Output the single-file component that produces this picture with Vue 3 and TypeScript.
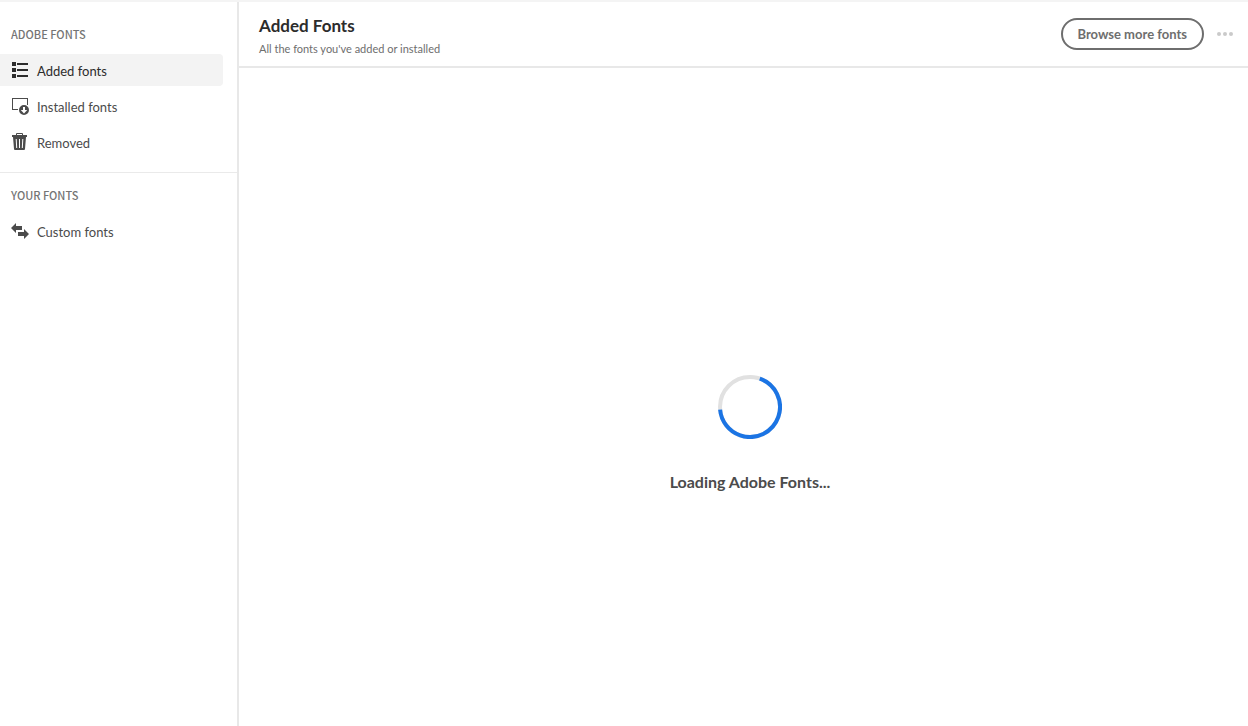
<script setup lang="ts">
import { ref } from 'vue'

type IconName = 'list' | 'install' | 'trash' | 'swap'

interface NavItem {
  id: string
  label: string
  icon: IconName
}

interface NavGroup {
  title: string
  items: NavItem[]
}

const groups: NavGroup[] = [
  {
    title: 'ADOBE FONTS',
    items: [
      { id: 'added', label: 'Added fonts', icon: 'list' },
      { id: 'installed', label: 'Installed fonts', icon: 'install' },
      { id: 'removed', label: 'Removed', icon: 'trash' },
    ],
  },
  {
    title: 'YOUR FONTS',
    items: [{ id: 'custom', label: 'Custom fonts', icon: 'swap' }],
  },
]

const selected = ref('added')
</script>

<template>
  <div class="app">
    <nav class="sidebar" aria-label="Fonts">
      <section v-for="group in groups" :key="group.title" class="group">
        <h2 class="group-title">{{ group.title }}</h2>
        <ul class="items">
          <li v-for="item in group.items" :key="item.id">
            <a
              href="#"
              class="item"
              :class="{ selected: selected === item.id }"
              :aria-current="selected === item.id ? 'page' : undefined"
              @click.prevent="selected = item.id"
            >
              <svg class="icon" viewBox="0 0 18 18" aria-hidden="true">
                <g v-if="item.icon === 'list'">
                  <path d="M1 1h4v4H1zM1 7h4v4H1zM1 13h4v4H1z" />
                  <path d="M6 2h11v2H6zM6 8h11v2H6zM6 14h11v2H6z" />
                </g>
                <g v-else-if="item.icon === 'install'">
                  <path d="M1 1h16v7h-1V2H2v10h5v1H1z" />
                  <path
                    fill-rule="evenodd"
                    d="M13 8a5 5 0 1 0 0 10a5 5 0 0 0 0-10zM12 10h2v3h2.2L13 16.4L9.8 13H12z"
                  />
                </g>
                <g v-else-if="item.icon === 'trash'">
                  <path
                    fill-rule="evenodd"
                    d="M5 2V1a1 1 0 0 1 1-1h5a1 1 0 0 1 1 1v1h4v2H1V2zM6 1v1h5V1z"
                  />
                  <path
                    fill-rule="evenodd"
                    d="M2 4h13l-1 12a1 1 0 0 1-1 1H4a1 1 0 0 1-1-1zM4.700 6l.5 9h1l-.5-9zM8 6v9h1V6zM11.300 6l-.5 9h1l.5-9z"
                  />
                </g>
                <g v-else>
                  <path d="M0 6l5-5v3h6v4H5v3z" />
                  <path d="M18 12l-5 5v-3H7v-4h6V7z" />
                </g>
              </svg>
              <span>{{ item.label }}</span>
            </a>
          </li>
        </ul>
      </section>
    </nav>

    <main class="content">
      <header class="header">
        <div class="heading">
          <h1>Added Fonts</h1>
          <p>All the fonts you've added or installed</p>
        </div>
        <button type="button" class="browse">Browse more fonts</button>
        <button type="button" class="more" aria-label="More options">
          <svg viewBox="0 0 16 4" aria-hidden="true">
            <circle cx="2" cy="2" r="2" />
            <circle cx="8" cy="2" r="2" />
            <circle cx="14" cy="2" r="2" />
          </svg>
        </button>
      </header>

      <div class="loading" role="status">
        <svg class="spinner" viewBox="0 0 64 64" aria-hidden="true">
          <circle class="track" cx="32" cy="32" r="30" />
          <circle
            class="arc"
            cx="32"
            cy="32"
            r="30"
            pathLength="360"
            stroke-dasharray="246 114"
            transform="rotate(-71 32 32)"
          />
        </svg>
        <p>Loading Adobe Fonts...</p>
      </div>
    </main>
  </div>
</template>

<style>
body {
  margin: 0;
  background: #fff;
}
</style>

<style scoped>
.app {
  display: flex;
  min-height: 100vh;
  box-sizing: border-box;
  border-top: 2px solid #f4f4f4;
  font-family: Lato, "Noto Sans", sans-serif;
  color: #4b4b4b;
}

h1,
h2,
p,
ul {
  margin: 0;
  padding: 0;
}

.sidebar {
  flex: none;
  width: 237px;
  border-right: 2px solid #e8e8e8;
}

.group {
  padding: 24px 0 14px;
}

.group + .group {
  padding-top: 14px;
  border-top: 1px solid #eaeaea;
}

.group-title {
  padding-left: 11px;
  font-family: "Noto Sans CJK SC", "Noto Sans", sans-serif;
  font-size: 11px;
  line-height: 16px;
  font-weight: 500;
  color: #747474;
}

.items {
  display: flex;
  flex-direction: column;
  gap: 4px;
  margin: 12px 14px 0 0;
  list-style: none;
}

.item {
  display: flex;
  align-items: center;
  gap: 8px;
  height: 32px;
  padding-left: 11px;
  border-radius: 0 4px 4px 0;
  color: #4b4b4b;
  font-size: 13px;
  line-height: 20px;
  text-decoration: none;
}

.item span {
  padding-top: 2px;
}

.item.selected {
  background: #f3f3f3;
  color: #2c2c2c;
}

.icon {
  width: 18px;
  height: 18px;
  fill: currentColor;
}

.content {
  flex: 1;
  min-width: 0;
  display: flex;
  flex-direction: column;
}

.header {
  display: flex;
  align-items: center;
  height: 64px;
  padding: 0 14px 0 20px;
  border-bottom: 2px solid #e8e8e8;
}

.heading {
  flex: 1;
  padding-top: 6px;
}

h1 {
  font-size: 17px;
  line-height: 24px;
  font-weight: 700;
  color: #2c2c2c;
}

.heading p {
  font-size: 11px;
  line-height: 22px;
  color: #6e6e6e;
}

.browse {
  height: 32px;
  padding: 0 15px 1px;
  border: 2px solid #6e6e6e;
  border-radius: 16px;
  background: transparent;
  color: #6e6e6e;
  font-family: inherit;
  font-size: 13px;
  line-height: 20px;
  font-weight: 700;
}

.more {
  display: flex;
  margin-left: 12px;
  padding: 8px 0;
  border: 0;
  background: transparent;
}

.more svg {
  width: 18px;
  height: 4px;
  fill: #cacaca;
}

.loading {
  flex: 1;
  display: flex;
  flex-direction: column;
  align-items: center;
  justify-content: center;
  gap: 31px;
  padding: 75px 0 0 13px;
  box-sizing: border-box;
}

.loading p {
  font-size: 16px;
  line-height: 24px;
  font-weight: 700;
}

.spinner {
  width: 64px;
  height: 64px;
  fill: none;
  stroke-width: 4;
}

.track {
  stroke: #e1e1e1;
}

.arc {
  stroke: #1b74e4;
}
</style>
